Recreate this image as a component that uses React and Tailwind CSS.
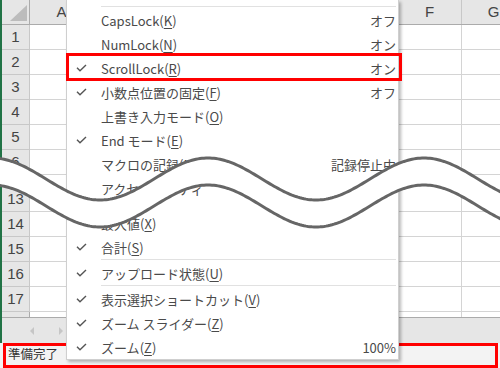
import React from "react";

const P = 216;
function curveY(x, off) {
  return 179 + off + 21 * Math.cos((2 * Math.PI * (x - 100)) / P);
}
function buildPts(off) {
  const pts = [];
  for (let x = -6; x <= 506; x += 2) pts.push([x, curveY(x, off)]);
  return pts;
}
const topPts = buildPts(0);
const botPts = buildPts(27);
const toD = (pts) => pts.map((p, i) => (i === 0 ? "M" : "L") + p[0].toFixed(1) + " " + p[1].toFixed(2)).join(" ");
const topD = toD(topPts);
const botD = toD(botPts);
const bandD =
  topD +
  " " +
  botPts
    .slice()
    .reverse()
    .map((p) => "L" + p[0].toFixed(1) + " " + p[1].toFixed(2))
    .join(" ") +
  " Z";

const COLS = "grid grid-cols-[28px_64px_76px_76px_76px_76px_64px_64px]";

function HeaderRow() {
  const letters = ["A", "B", "C", "D", "E", "F", "G"];
  return (
    <div className={COLS + " h-[25px] bg-[#e6e6e6] border-b border-[#ababab]"}>
      <div className="relative border-r border-[#ababab]">
        <svg width="28" height="24" className="absolute left-0 top-0">
          <polygon points="8,21 25,21 25,5" fill="#bcbcbc" />
        </svg>
      </div>
      {letters.map((l) => (
        <div
          key={l}
          className="flex items-center justify-center border-r border-[#c8c8c8] text-[15px] text-[#444] font-['Liberation_Sans',sans-serif]"
        >
          {l}
        </div>
      ))}
    </div>
  );
}

function Row({ n, h = "h-[25px]", border = true }) {
  return (
    <div className={COLS + " " + h + (border ? " border-b border-[#d4d4d4]" : "")}>
      <div
        className={
          "flex items-center justify-center bg-[#e6e6e6] border-r border-[#ababab] text-[15px] text-[#444] font-['Liberation_Sans',sans-serif] " +
          (border ? "-mb-px border-b border-[#c8c8c8]" : "")
        }
      >
        {n}
      </div>
      {[0, 1, 2, 3, 4, 5, 6].map((i) => (
        <div key={i} className="border-r border-[#d4d4d4]" />
      ))}
    </div>
  );
}

function Check() {
  return (
    <svg width="11" height="8" viewBox="0 0 11 8">
      <path d="M1 3.8 L4 6.8 L10 1" fill="none" stroke="#555" strokeWidth="1.4" />
    </svg>
  );
}

function Label({ text, k }) {
  return (
    <span>
      {text}(<span className="underline underline-offset-2">{k}</span>)
    </span>
  );
}

function Item({ text, k, checked, value }) {
  return (
    <div className="flex items-center h-[24px]">
      <div className="w-[34px] pl-[9px] flex items-center">{checked ? <Check /> : null}</div>
      <div className="flex-1">{k ? <Label text={text} k={k} /> : text}</div>
      {value ? <div className="pr-[2px]">{value}</div> : null}
    </div>
  );
}

function Sep() {
  return (
    <div className="h-[2px]">
      <div className="ml-[34px] mr-[2px] h-px bg-[#e1e1e1]" />
    </div>
  );
}

export default function App() {
  return (
    <div className="relative w-[500px] h-[368px] overflow-hidden bg-white">
      <div className="flex h-[343px]">
        <div className="w-[2px] bg-[#217346]" />
        <div className="flex-1 flex flex-col overflow-hidden">
          <HeaderRow />
          {[1, 2, 3, 4, 5, 6].map((n) => (
            <Row key={n} n={n} />
          ))}
          <Row n="" h="h-[12px]" border={false} />
          {[13, 14, 15, 16, 17].map((n) => (
            <Row key={n} n={n} />
          ))}
          <Row n="" h="h-[5px]" border={false} />
          <div className="h-[26px] bg-[#e6e6e6] border-t border-[#ababab] flex items-center">
            <svg width="60" height="26" viewBox="0 0 60 26" className="ml-[24px]">
              <polygon points="8,9 8,17 4,13" fill="#c6c6c6" />
              <polygon points="33,9 33,17 37,13" fill="#c6c6c6" />
            </svg>
          </div>
        </div>
      </div>
      <div className="h-[25px] bg-[#f3f3f3] flex items-center pl-[8px] pb-[2px] text-[12.5px] text-[#333] font-['Noto_Sans_CJK_JP',sans-serif]">
        準備完了
      </div>

      {/* status bar annotation */}
      <div className="absolute left-[3px] top-[343px] w-[495px] h-[25px] border-[3px] border-[#ff0000]" />

      {/* context menu */}
      <div className="absolute left-[66px] top-0 w-[333px] h-[360px] bg-white border-x border-b border-[#cfcfcf] shadow-[2px_2px_3px_rgba(0,0,0,0.28)] pt-[6px] text-[13px] text-[#4a4a4a] font-['Noto_Sans_CJK_JP',sans-serif] leading-none">
        <div className="h-[2px]">
          <div className="ml-[34px] mr-[2px] h-px bg-[#e1e1e1]" />
        </div>
        <Item text="CapsLock" k="K" value="オフ" />
        <Item text="NumLock" k="N" value="オン" />
        <Item text="ScrollLock" k="R" checked value="オン" />
        <Item text="小数点位置の固定" k="F" checked value="オフ" />
        <Item text="上書き入力モード" k="O" />
        <Item text="End モード" k="E" checked />
        <Item text="マクロの記録" k="M" value="記録停止中" />
        <Item text="アクセシビリティ" />
        <div className="h-[11px]" />
        <Item text="最大値" k="X" />
        <Item text="合計" k="S" checked />
        <Sep />
        <Item text="アップロード状態" k="U" checked />
        <Sep />
        <Item text="表示選択ショートカット" k="V" checked />
        <Item text="ズーム スライダー" k="Z" checked />
        <Item text="ズーム" k="Z" checked value="100%" />
      </div>

      {/* ScrollLock annotation */}
      <div className="absolute left-[66px] top-[53px] w-[336px] h-[28px] border-[3px] border-[#ff0000]" />

      {/* break wave */}
      <svg className="absolute left-0 top-0 pointer-events-none" width="500" height="368" viewBox="0 0 500 368">
        <path d={bandD} fill="#ffffff" />
        <path d={topD} fill="none" stroke="#666666" strokeWidth="3" />
        <path d={botD} fill="none" stroke="#666666" strokeWidth="3" />
      </svg>
    </div>
  );
}
